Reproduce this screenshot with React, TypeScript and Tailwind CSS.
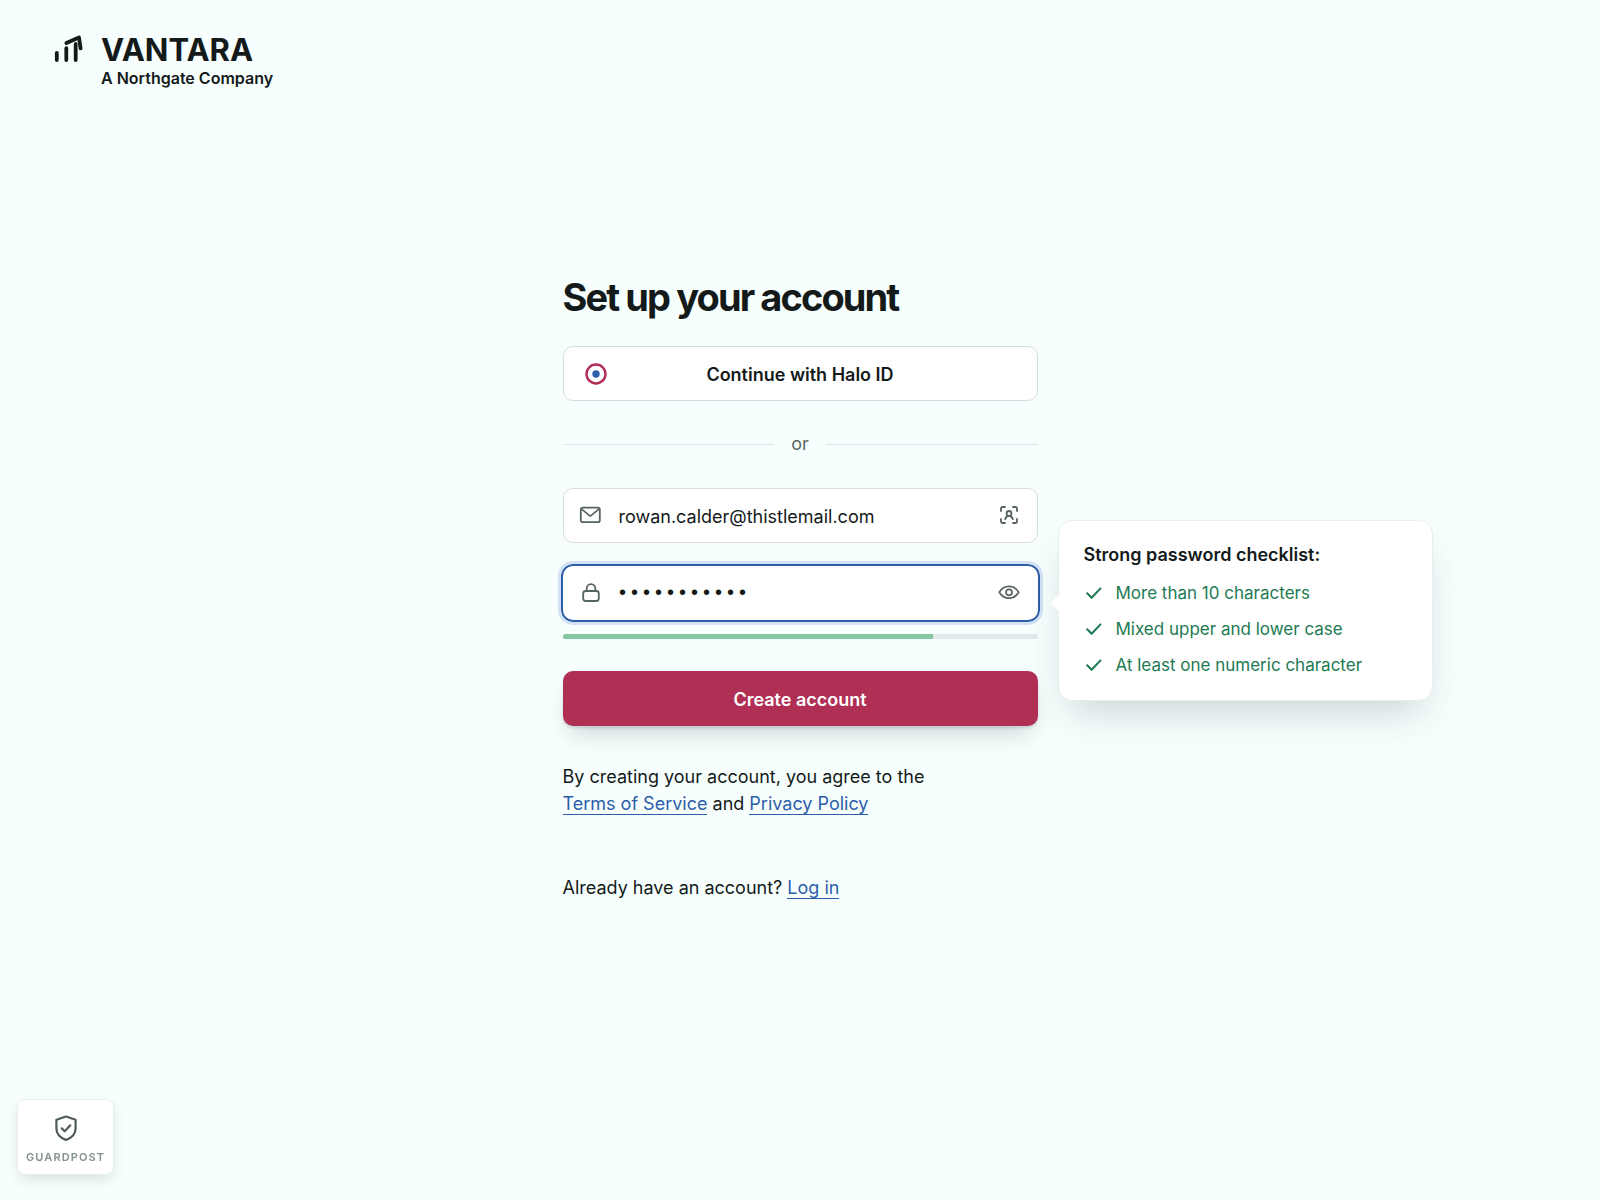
import React, { useState } from 'react';

const checklist = [
  'More than 10 characters',
  'Mixed upper and lower case',
  'At least one numeric character',
];

const Logo = () => (
  <svg className="h-8 w-8" viewBox="0 0 32 32" fill="none" stroke="currentColor" strokeWidth="3.8" strokeLinecap="round" strokeLinejoin="round" aria-hidden="true">
    <path d="M3.8 20.8v7.200" />
    <path d="M13.3 16.200v11.800" />
    <path d="M22.700 12v16" />
    <path d="M13.400 11L26 5.400l1.600 11" />
  </svg>
);

const MailIcon = () => (
  <svg className="h-6 w-6" viewBox="0 0 24 24" fill="none" stroke="currentColor" strokeWidth="1.8" strokeLinecap="round" strokeLinejoin="round" aria-hidden="true">
    <rect x="2.8" y="3.600" width="19" height="14.600" rx="2" />
    <path d="M3.400 4.800l8.200 6.800a1.100 1.100 0 0 0 1.400 0l8.200-6.800" strokeWidth="1.600" />
  </svg>
);

const LockIcon = () => (
  <svg className="h-6 w-6" viewBox="0 0 24 24" fill="none" stroke="currentColor" strokeWidth="1.8" strokeLinecap="round" strokeLinejoin="round" aria-hidden="true">
    <rect x="4.200" y="10" width="15.600" height="10" rx="2.500" />
    <path d="M7.700 10V7.400a4.300 4.300 0 0 1 8.600 0V10" />
  </svg>
);

const ContactIcon = () => (
  <svg className="h-6 w-6" viewBox="0 1 24 24" fill="none" stroke="currentColor" strokeWidth="1.8" strokeLinecap="round" strokeLinejoin="round" aria-hidden="true">
    <path d="M4 8V5.500A1.500 1.500 0 0 1 5.500 4H8M16 4h2.500A1.500 1.500 0 0 1 20 5.500V8M20 16v2.500a1.500 1.500 0 0 1-1.500 1.500H16M8 20H5.500A1.500 1.500 0 0 1 4 18.500V16" />
    <circle cx="12" cy="10.400" r="2.400" />
    <path d="M8.200 16.200c.5-2.200 1.900-3.300 3.800-3.300s3.300 1.100 3.800 3.300" />
  </svg>
);

const EyeIcon = () => (
  <svg className="h-6 w-6" viewBox="0 0 24 24" fill="none" stroke="currentColor" strokeWidth="1.7" strokeLinecap="round" strokeLinejoin="round" aria-hidden="true">
    <path d="M2.300 11.300C4.600 7.500 8.100 5.400 12 5.400s7.400 2.100 9.700 5.900c-2.300 3.800-5.800 5.900-9.700 5.900s-7.400-2.100-9.700-5.900z" />
    <circle cx="12" cy="11.300" r="3" />
  </svg>
);

const CheckIcon = () => (
  <svg className="h-5 w-5 shrink-0" viewBox="0 0 20 20" fill="none" stroke="currentColor" strokeWidth="2" strokeLinecap="round" strokeLinejoin="round" aria-hidden="true">
    <path d="M3.200 10.200L7.600 14.700 16.500 5.400" />
  </svg>
);

const App = () => {
  const [email, setEmail] = useState('rowan.calder@thistlemail.com');
  const [password, setPassword] = useState('Thistle2024');
  const [visible, setVisible] = useState(false);

  return (
    <div className="flex min-h-screen flex-col bg-[#f7fffe] font-['Inter','Liberation_Sans',sans-serif] text-[#141a1a]">
      <header className="flex gap-4 px-[53px] pt-8">
        <Logo />
        <div>
          <div className="text-[31px] leading-9 font-bold">VANTARA</div>
          <div className="text-base leading-5 font-semibold">A Northgate Company</div>
        </div>
      </header>

      <main className="mx-auto w-full max-w-[475px] pt-[184px]">
        <h1 className="text-[38px] leading-[50px] font-bold tracking-tighter">Set up your account</h1>

        <button type="button" className="relative mt-6 flex h-[55px] w-full items-center justify-center rounded-[10px] border border-[#d8dedf] bg-white pt-0.5 text-lg font-semibold">
          <svg className="absolute top-4 left-[21px] h-[22px] w-[22px]" viewBox="0 0 22 22" aria-hidden="true">
            <circle cx="11" cy="11" r="9.500" fill="none" stroke="#b02f54" strokeWidth="2.400" />
            <circle cx="11" cy="11" r="3.700" fill="#2d5ea9" />
          </svg>
          Continue with Halo ID
        </button>

        <div className="mt-[29px] flex items-center gap-[17px] text-lg leading-7 text-[#5c6867]">
          <div className="h-px flex-1 bg-[#e1e7e8]" />
          or
          <div className="h-px flex-1 bg-[#e1e7e8]" />
        </div>

        <form onSubmit={(e) => e.preventDefault()}>
          <div className="mt-[30px] flex h-[55px] items-center rounded-[10px] border border-[#d8dedf] bg-white pr-4 pl-[14px] text-[#566462]">
            <label htmlFor="email" aria-label="Email">
              <MailIcon />
            </label>
            <input
              id="email"
              type="email"
              value={email}
              onChange={(e) => setEmail(e.target.value)}
              className="ml-[17px] h-full min-w-0 flex-1 bg-transparent pt-0.5 text-lg text-[#141a1a] outline-none"
            />
            <ContactIcon />
          </div>

          <div className="relative mt-[23px]">
            <div className="flex h-[54px] items-center rounded-[10px] bg-white pr-[17px] pl-4 text-[#566462] ring-2 ring-[#2d5ea9] outline-3 outline-offset-2 outline-[#d3e2f5]">
              <label htmlFor="password" aria-label="Password">
                <LockIcon />
              </label>
              <input
                id="password"
                type={visible ? 'text' : 'password'}
                value={password}
                onChange={(e) => setPassword(e.target.value)}
                className="ml-[14px] h-full min-w-0 flex-1 bg-transparent font-['Liberation_Mono',monospace] text-xl text-[#141a1a] outline-none"
              />
              <button type="button" aria-label="Show password" onClick={() => setVisible(!visible)}>
                <EyeIcon />
              </button>
            </div>

            <div className="absolute -top-[46px] left-full ml-5 w-[375px] rounded-[14px] border border-[#e8eeee] bg-white px-[25px] pt-[19px] pb-[21px] shadow-[0_20px_40px_-12px_rgba(20,40,45,0.22)]">
              <div className="absolute top-[76px] -left-[6px] h-3 w-3 rotate-45 rounded-[2px] bg-white" />
              <h2 className="text-lg leading-[30px] font-semibold">Strong password checklist:</h2>
              <ul className="mt-[9px] space-y-2 text-[17px] leading-7 text-[#1c7a53]">
                {checklist.map((item) => (
                  <li key={item} className="flex items-center gap-3">
                    <CheckIcon />
                    {item}
                  </li>
                ))}
              </ul>
            </div>
          </div>

          <div className="mt-[14px] h-[5px] overflow-hidden rounded-full bg-[#e3e9ea]">
            <div className="h-full w-[78%] bg-[#83c7a3]" />
          </div>

          <button type="submit" className="mt-8 h-[55px] w-full rounded-[10px] bg-[#b02f54] pt-0.5 text-lg font-semibold text-white shadow-[0_2px_3px_rgba(20,30,35,0.12),0_14px_24px_-8px_rgba(20,30,35,0.2)]">
            Create account
          </button>
        </form>

        <p className="mt-[37px] text-lg leading-[27px]">
          By creating your account, you agree to the
          <br />
          <a href="#terms" className="border-b border-[#2d5ea9] text-[#2d5ea9]">Terms of Service</a> and{' '}
          <a href="#privacy" className="border-b border-[#2d5ea9] text-[#2d5ea9]">Privacy Policy</a>
        </p>
        <p className="mt-[57px] text-lg leading-[27px]">
          Already have an account?{' '}
          <a href="#login" className="border-b border-[#2d5ea9] text-[#2d5ea9]">Log in</a>
        </p>
      </main>

      <div className="fixed bottom-[25px] left-[17px] flex flex-col items-center rounded-lg border border-[#e8eeee] bg-white px-2 pt-[14px] pb-[10px] shadow-[0_6px_14px_-2px_rgba(20,40,45,0.14)]">
        <svg className="h-7 w-7 text-[#4f5b5a]" viewBox="0 0 28 28" fill="none" stroke="currentColor" strokeWidth="2.200" strokeLinecap="round" strokeLinejoin="round" aria-hidden="true">
          <path d="M14 2.500l9.600 3.300v8.700c0 5.500-4 9.300-9.600 11.500-5.600-2.200-9.600-6-9.600-11.500V5.800z" />
          <path d="M9.700 14.300l3 3 5.600-6" />
        </svg>
        <div className="mt-2 text-[11px] leading-[14px] font-semibold tracking-widest text-[#859191]">GUARDPOST</div>
      </div>
    </div>
  );
};

export default App;
